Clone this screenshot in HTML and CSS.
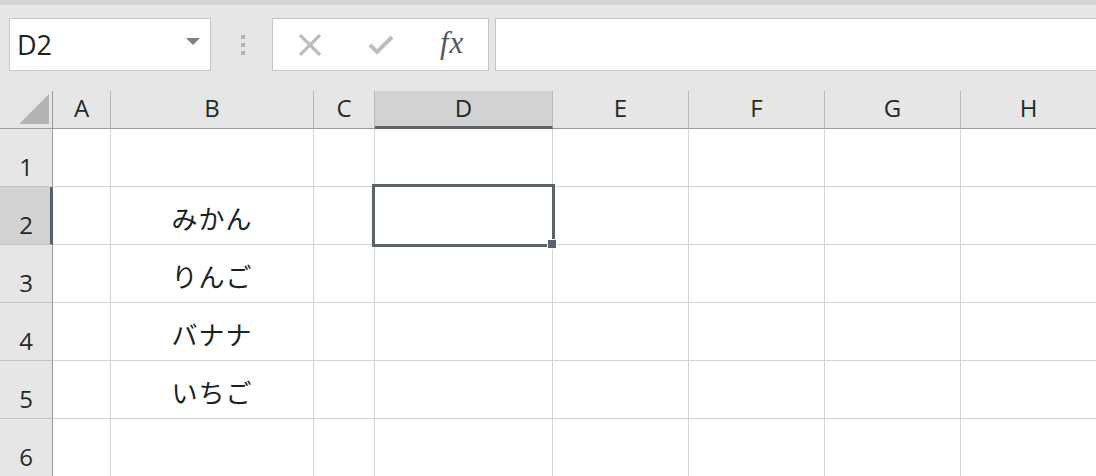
FILE: index.html
```html
<!DOCTYPE html>
<html lang="ja">
<head>
<meta charset="utf-8">
<title>Sheet</title>
<link rel="stylesheet" href="styles.css">
</head>
<body>
<div class="app">
  <div class="toolbar">
    <div class="namebox">
      <span class="name">D2</span>
      <svg class="caret" width="14" height="7" viewBox="0 0 14 7"><path d="M0 0H14L7 7Z" fill="#7f7f7f"/></svg>
    </div>
    <div class="grip"><i></i><i></i><i></i></div>
    <div class="fbuttons">
      <svg class="ico" width="24" height="22" viewBox="0 0 24 22"><path d="M2 1L22 21M22 1L2 21" stroke="#bdbdbd" stroke-width="3.2" fill="none"/></svg>
      <svg class="ico" width="26" height="22" viewBox="0 0 26 22"><path d="M2 11L9 18L24 3" stroke="#bdbdbd" stroke-width="4" fill="none"/></svg>
      <span class="fx">fx</span>
    </div>
    <div class="finput"></div>
  </div>
  <div class="sheet">
    <div class="corner"><svg width="30" height="30" viewBox="0 0 30 30"><path d="M30 0V30H0Z" fill="#b4b4b4"/></svg></div>
    <div class="ch">A</div><div class="ch">B</div><div class="ch">C</div><div class="ch sel">D</div><div class="ch">E</div><div class="ch">F</div><div class="ch">G</div><div class="ch">H</div>

    <div class="rh">1</div><div class="c"></div><div class="c"></div><div class="c"></div><div class="c"></div><div class="c"></div><div class="c"></div><div class="c"></div><div class="c"></div>
    <div class="rh sel">2</div><div class="c"></div><div class="c jp">みかん</div><div class="c"></div><div class="c"></div><div class="c"></div><div class="c"></div><div class="c"></div><div class="c"></div>
    <div class="rh">3</div><div class="c"></div><div class="c jp">りんご</div><div class="c"></div><div class="c"></div><div class="c"></div><div class="c"></div><div class="c"></div><div class="c"></div>
    <div class="rh">4</div><div class="c"></div><div class="c jp">バナナ</div><div class="c"></div><div class="c"></div><div class="c"></div><div class="c"></div><div class="c"></div><div class="c"></div>
    <div class="rh">5</div><div class="c"></div><div class="c jp">いちご</div><div class="c"></div><div class="c"></div><div class="c"></div><div class="c"></div><div class="c"></div><div class="c"></div>
    <div class="rh">6</div><div class="c"></div><div class="c"></div><div class="c"></div><div class="c"></div><div class="c"></div><div class="c"></div><div class="c"></div><div class="c"></div>

    <div class="selection"><span class="handle"></span></div>
  </div>
</div>
</body>
</html>
```
FILE: styles.css
```css
* { box-sizing: border-box; }
html, body { margin: 0; padding: 0; }
body {
  width: 1096px;
  height: 476px;
  overflow: hidden;
  background: #e6e6e6;
  font-family: "Open Sans", "Noto Sans", "Noto Sans CJK JP", sans-serif;
  color: #1e2b25;
}
.app {
  border-top: 5px solid #d4d4d4;
}
.toolbar {
  display: flex;
  align-items: stretch;
  height: 53px;
  margin-top: 13px;
  padding-left: 9px;
}
.namebox {
  width: 202px;
  background: #fff;
  border: 1px solid #c6c6c6;
  display: flex;
  align-items: center;
  justify-content: space-between;
  padding: 0 10px 0 7px;
}
.name {
  font-size: 27px;
  color: #222;
}
.caret { margin-top: -6px; }
.grip {
  width: 61px;
  display: flex;
  flex-direction: column;
  align-items: center;
  justify-content: center;
  gap: 4px;
  padding-left: 3px;
}
.grip i {
  display: block;
  width: 4px;
  height: 4px;
  background: #b4b4b4;
}
.fbuttons {
  width: 217px;
  background: #fff;
  border: 1px solid #c6c6c6;
  display: flex;
  align-items: center;
  padding-left: 25px;
}
.fbuttons .ico:nth-child(2) { margin-left: 46px; }
.fx {
  margin-left: 46px;
  font-family: "Liberation Serif", "DejaVu Serif", serif;
  font-style: italic;
  font-size: 31px;
  color: #52585d;
  margin-top: -4px;
  letter-spacing: 1px;
}
.finput {
  flex: 1;
  margin-left: 6px;
  margin-right: -2px;
  background: #fff;
  border: 1px solid #c6c6c6;
}
.sheet {
  position: relative;
  margin-top: 20px;
  display: grid;
  grid-template-columns: 53px 58px 203px 61px 178px 136px 136px 136px 136px;
  grid-template-rows: 38px repeat(6, 58px);
}
.corner {
  border-right: 1px solid #9d9d9d;
  border-bottom: 1px solid #9d9d9d;
  display: flex;
  align-items: flex-end;
  justify-content: flex-end;
  padding: 0 3px 4px 0;
}
.corner svg { display: block; }
.ch {
  background: #e6e6e6;
  border-right: 1px solid #b8b8b8;
  border-bottom: 1px solid #9d9d9d;
  font-size: 24px;
  line-height: 1;
  display: flex;
  align-items: flex-end;
  justify-content: center;
  padding-bottom: 8px;
}
.ch.sel {
  background: #d2d2d2;
  border-bottom: 3px solid #57626b;
  padding-bottom: 6px;
}
.rh {
  background: #e6e6e6;
  border-right: 1px solid #9d9d9d;
  border-bottom: 1px solid #c2c2c2;
  font-size: 24px;
  line-height: 1;
  display: flex;
  align-items: flex-end;
  justify-content: center;
  padding-bottom: 7px;
}
.rh.sel {
  background: #d2d2d2;
  border-right: 3px solid #57626b;
  padding-left: 2px;
}
.c {
  background: #fff;
  border-right: 1px solid #d4d4d4;
  border-bottom: 1px solid #d4d4d4;
}
.jp {
  font-family: "Noto Sans CJK JP", sans-serif;
  font-size: 26px;
  font-weight: 400;
  letter-spacing: 1px;
  line-height: 1;
  display: flex;
  align-items: flex-end;
  justify-content: center;
  padding-bottom: 13px;
  color: #16241d;
}
.selection {
  position: absolute;
  left: 372px;
  top: 93px;
  width: 183px;
  height: 63px;
  border: 3px solid #59636b;
}
.handle {
  position: absolute;
  right: -5px;
  bottom: -5px;
  width: 10px;
  height: 10px;
  background: #59636b;
  border: 1px solid #fff;
}
```
